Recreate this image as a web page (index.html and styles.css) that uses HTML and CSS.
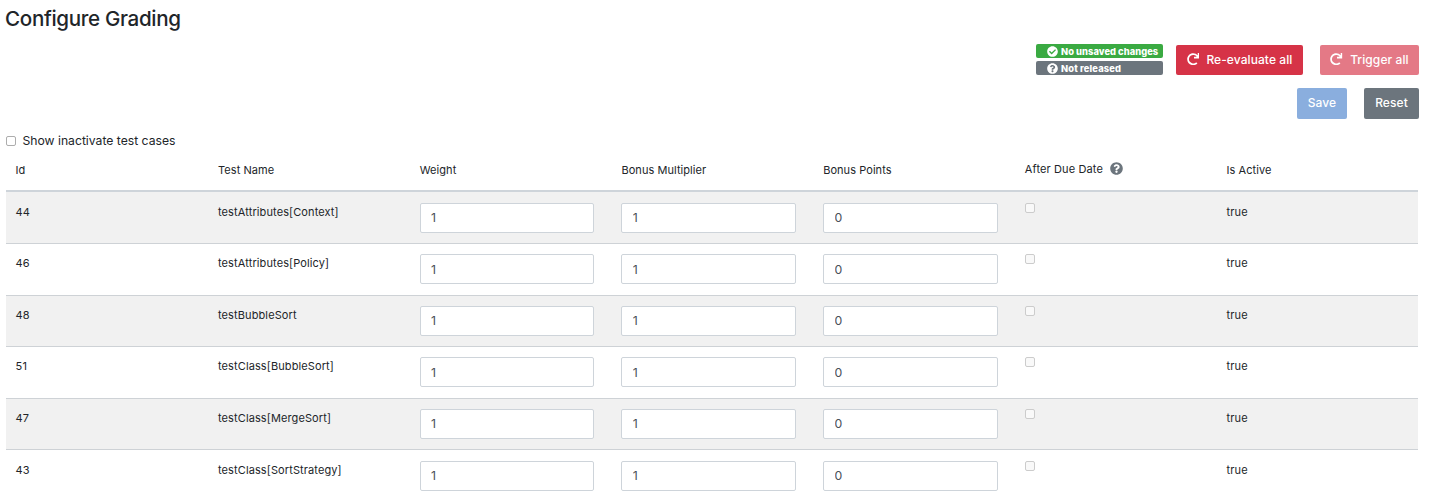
FILE: index.html
```html
<!DOCTYPE html>
<html lang="en">
<head>
<meta charset="utf-8">
<title>Configure Grading</title>
<link rel="stylesheet" href="styles.css">
</head>
<body>
<svg class="symbols" width="0" height="0">
  <symbol id="redo" viewBox="0 0 512 512"><path d="M500.33 0h-47.41a12 12 0 0 0-12 12.57l4 82.76A247.42 247.42 0 0 0 256 8C119.34 8 7.9 119.53 8 256.19 8.1 393.07 119.1 504 256 504a247.1 247.1 0 0 0 166.18-63.91 12 12 0 0 0 .48-17.43l-34-34a12 12 0 0 0-16.38-.55A176 176 0 1 1 402.1 157.8l-101.53-4.87a12 12 0 0 0-12.57 12v47.41a12 12 0 0 0 12 12h200.33a12 12 0 0 0 12-12V12a12 12 0 0 0-12-12z"/></symbol>
  <symbol id="check" viewBox="0 0 512 512"><path d="M504 256c0 136.967-111.033 248-248 248S8 392.967 8 256 119.033 8 256 8s248 111.033 248 248zM227.314 387.314l184-184c6.248-6.248 6.248-16.379 0-22.627l-22.627-22.627c-6.248-6.249-16.379-6.249-22.628 0L216 308.118l-70.059-70.059c-6.248-6.248-16.379-6.248-22.628 0l-22.627 22.627c-6.248 6.248-6.248 16.379 0 22.627l104 104c6.249 6.249 16.379 6.249 22.628.001z"/></symbol>
  <symbol id="question" viewBox="0 0 512 512"><path d="M504 256c0 136.997-111.043 248-248 248S8 392.997 8 256C8 119.083 119.043 8 256 8s248 111.083 248 248zM262.655 90c-54.497 0-89.255 22.957-116.549 63.758-3.536 5.286-2.353 12.415 2.715 16.258l34.699 26.31c5.205 3.947 12.621 3.008 16.665-2.122 17.864-22.658 30.113-35.797 57.303-35.797 20.429 0 45.698 13.148 45.698 32.958 0 14.976-12.363 22.667-32.534 33.976C247.128 238.528 216 254.941 216 296v4c0 6.627 5.373 12 12 12h56c6.627 0 12-5.373 12-12v-1.333c0-28.462 83.186-29.647 83.186-106.667 0-58.002-60.165-102-116.531-102zM256 338c-25.365 0-46 20.635-46 46 0 25.364 20.635 46 46 46s46-20.636 46-46c0-25.364-20.635-46-46-46z"/></symbol>
</svg>
<main class="page">
  <h1 class="title">Configure Grading</h1>
  <div class="toolbar">
    <div class="badges">
      <span class="badge badge-success"><svg class="badge-icon"><use href="#check"/></svg><span>No unsaved changes</span></span>
      <span class="badge badge-secondary"><svg class="badge-icon"><use href="#question"/></svg><span class="released">Not released</span></span>
    </div>
    <button class="btn btn-danger btn-evaluate"><svg class="btn-icon"><use href="#redo"/></svg><span>Re-evaluate all</span></button>
    <button class="btn btn-danger btn-trigger" disabled><svg class="btn-icon"><use href="#redo"/></svg><span>Trigger all</span></button>
  </div>
  <div class="actions">
    <button class="btn btn-primary" disabled><span>Save</span></button>
    <button class="btn btn-secondary"><span>Reset</span></button>
  </div>
  <label class="filter"><input type="checkbox" class="check"><span class="filter-text">Show inactivate test cases</span></label>
  <div class="table">
    <div class="row head">
      <span>Id</span><span>Test Name</span><span>Weight</span><span>Bonus Multiplier</span><span>Bonus Points</span>
      <span class="due">After Due Date<svg class="help"><use href="#question"/></svg></span><span>Is Active</span>
    </div>
    <div class="row odd"><span>44</span><span>testAttributes[Context]</span><input class="field" value="1"><input class="field" value="1"><input class="field" value="0"><input type="checkbox" class="check" disabled><span>true</span></div>
    <div class="row"><span>46</span><span>testAttributes[Policy]</span><input class="field" value="1"><input class="field" value="1"><input class="field" value="0"><input type="checkbox" class="check" disabled><span>true</span></div>
    <div class="row odd"><span>48</span><span>testBubbleSort</span><input class="field" value="1"><input class="field" value="1"><input class="field" value="0"><input type="checkbox" class="check" disabled><span>true</span></div>
    <div class="row"><span>51</span><span>testClass[BubbleSort]</span><input class="field" value="1"><input class="field" value="1"><input class="field" value="0"><input type="checkbox" class="check" disabled><span>true</span></div>
    <div class="row odd"><span>47</span><span>testClass[MergeSort]</span><input class="field" value="1"><input class="field" value="1"><input class="field" value="0"><input type="checkbox" class="check" disabled><span>true</span></div>
    <div class="row"><span>43</span><span>testClass[SortStrategy]</span><input class="field" value="1"><input class="field" value="1"><input class="field" value="0"><input type="checkbox" class="check" disabled><span>true</span></div>
  </div>
</main>
</body>
</html>
```
FILE: styles.css
```css
* { box-sizing: border-box; }
body { margin: 0; background: #fff; color: #212529; font-family: Inter, "Liberation Sans", sans-serif; overflow: hidden; }
svg { fill: currentColor; flex: none; }
.symbols { display: none; }
.page { height: 500px; overflow: hidden; padding: 5px 13px 0 6px; }
.title { margin: 0 0 0 -1px; height: 28px; font-size: 20.6px; line-height: 28px; font-weight: 500; letter-spacing: -0.33px; white-space: nowrap; }
.toolbar { display: flex; justify-content: flex-end; align-items: flex-start; margin-top: 12px; height: 30px; }
.badges { display: grid; gap: 3px; width: 127px; margin: -1px 13px 0 0; }
.badge { display: flex; align-items: center; gap: 3px; height: 14px; padding: 1px 0 0 11px; border-radius: 2px; color: #fff; font-size: 9.3px; font-weight: 800; letter-spacing: .06px; white-space: nowrap; }
.badge-success { background: #3aaa42; }
.badge-secondary { background: #6c757d; }
.badge-icon { width: 11px; height: 11px; }
.released { letter-spacing: .15px; }
.btn { display: flex; align-items: center; justify-content: center; height: 30px; padding: 0 0 2px; border: 0; border-radius: 2px; color: #fff; font: 500 12px Inter, "Liberation Sans", sans-serif; letter-spacing: .08px; white-space: nowrap; }
.btn:disabled { opacity: .65; }
.btn-danger { background: #d63347; }
.btn-trigger { width: 99px; margin-left: 17px; }
.btn-evaluate { width: 127px; }
.btn-icon { width: 12.4px; height: 12.4px; margin-right: 7.4px; }
.actions { display: flex; justify-content: flex-end; gap: 17px; margin-top: 13px; }
.actions .btn { height: 31px; }
.btn-primary { width: 50px; background: #4c83cd; }
.btn-secondary { width: 55px; background: #6c757d; }
.filter { display: flex; align-items: center; gap: 6.5px; height: 16px; margin-top: 14px; font-size: 12.2px; white-space: nowrap; }
.filter-text { padding-bottom: 2px; letter-spacing: -.01px; }
.check { appearance: none; width: 10px; height: 10px; margin: 0; border: 1px solid #adadad; border-radius: 2px; background: #fff; }
.check:disabled { border-color: #ccc; background: #f9f9f9; }
.table { width: 1412px; margin-top: 1px; }
.row { display: grid; grid-template-columns: repeat(7, 1fr); align-items: start; height: 51.6px; padding-top: 10.2px; border-bottom: 1px solid #ced2d6; font-size: 11px; letter-spacing: .11px; line-height: 18px; white-space: nowrap; }
.row > * { margin-left: 10.3px; }
.row > :first-child { margin-left: 9.6px; }
.head { height: 42.4px; padding-top: 11px; border-bottom: 2px solid #ced4da; letter-spacing: .06px; }
.odd { background: #f1f1f1; }
.due { display: flex; align-items: center; height: 16px; letter-spacing: .12px; }
.help { width: 13px; height: 13px; margin: -1px 0 0 6.8px; color: #6c757d; }
.field { width: 174.6px; height: 30px; padding: 0 10.4px; border: 1px solid #ced4da; border-radius: 2px; background: #fff; color: #495057; font: 12.3px Inter, "Liberation Sans", sans-serif; }
```
